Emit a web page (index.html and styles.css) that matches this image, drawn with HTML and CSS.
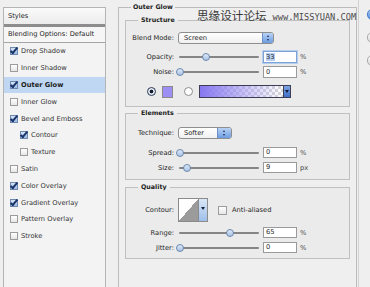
FILE: index.html
```html
<!DOCTYPE html>
<html lang="en">
<head>
	<meta charset="UTF-8">
	<title>Layer Style - Outer Glow</title>
	<link rel="stylesheet" href="styles.css">
</head>
<body>
	<div class="dialog">
		<!-- styles list on the left -->
		<div class="styles-list">
			<div class="list-head">Styles</div>
			<div class="list-blend">Blending Options: Default</div>
			<ul class="effects">
				<li><span class="check on"></span>Drop Shadow</li>
				<li><span class="check"></span>Inner Shadow</li>
				<li class="selected"><span class="check on"></span>Outer Glow</li>
				<li><span class="check"></span>Inner Glow</li>
				<li><span class="check on"></span>Bevel and Emboss</li>
				<li class="sub"><span class="check on"></span>Contour</li>
				<li class="sub"><span class="check"></span>Texture</li>
				<li><span class="check"></span>Satin</li>
				<li><span class="check on"></span>Color Overlay</li>
				<li><span class="check on"></span>Gradient Overlay</li>
				<li><span class="check"></span>Pattern Overlay</li>
				<li><span class="check"></span>Stroke</li>
			</ul>
		</div>

		<!-- outer glow settings -->
		<fieldset class="panel">
			<legend>Outer Glow</legend>

			<fieldset class="group structure">
				<legend>Structure</legend>
				<div class="row r-blend">
					<label>Blend Mode:</label>
					<div class="popup blend"><span>Screen</span><i class="stepper"></i></div>
				</div>
				<div class="row r-opacity">
					<label>Opacity:</label>
					<div class="slider"><span class="thumb" style="left:33%"></span></div>
					<div class="field focus"><span class="hl">33</span></div>
					<span class="unit">%</span>
				</div>
				<div class="row r-noise">
					<label>Noise:</label>
					<div class="slider"><span class="thumb" style="left:0%"></span></div>
					<div class="field">0</div>
					<span class="unit">%</span>
				</div>
				<div class="row r-color">
					<span class="radio on"></span>
					<span class="swatch"></span>
					<span class="radio"></span>
					<div class="gradient"><span class="grad-fill"></span><i class="grad-arrow"></i></div>
				</div>
			</fieldset>

			<fieldset class="group elements">
				<legend>Elements</legend>
				<div class="row r-tech">
					<label>Technique:</label>
					<div class="popup tech"><span>Softer</span><i class="stepper"></i></div>
				</div>
				<div class="row r-spread">
					<label>Spread:</label>
					<div class="slider"><span class="thumb" style="left:0%"></span></div>
					<div class="field">0</div>
					<span class="unit">%</span>
				</div>
				<div class="row r-size">
					<label>Size:</label>
					<div class="slider"><span class="thumb" style="left:9%"></span></div>
					<div class="field">9</div>
					<span class="unit">px</span>
				</div>
			</fieldset>

			<fieldset class="group quality">
				<legend>Quality</legend>
				<div class="row r-contour">
					<label>Contour:</label>
					<div class="contour"><span class="curve"></span><i class="curve-arrow"></i></div>
					<span class="check aa"></span>
					<span class="aa-text">Anti-aliased</span>
				</div>
				<div class="row r-range">
					<label>Range:</label>
					<div class="slider"><span class="thumb" style="left:63%"></span></div>
					<div class="field">65</div>
					<span class="unit">%</span>
				</div>
				<div class="row r-jitter">
					<label>Jitter:</label>
					<div class="slider"><span class="thumb" style="left:0%"></span></div>
					<div class="field">0</div>
					<span class="unit">%</span>
				</div>
			</fieldset>
		</fieldset>

		<!-- dialog buttons, mostly cut off -->
		<div class="buttons">
			<span class="btn default"></span>
			<span class="btn"></span>
			<span class="btn"></span>
		</div>
	</div>

	<div class="watermark">思缘设计论坛<span>www.MISSYUAN.COM</span></div>
</body>
</html>
```

FILE: styles.css
```css
body {
	margin: 0;
	background-color: #efefef;
	font-family: "DejaVu Sans", Verdana, sans-serif;
	font-size: 6.7px;
	color: #262626;
	overflow: hidden;
}
.dialog {
	display: flex;
	align-items: flex-start;
	width: 370px;
	height: 287px;
	overflow: hidden;
}
.dialog > * {
	flex-shrink: 0;
}

/* left list */
.styles-list {
	width: 101px;
	height: 285px;
	margin: 7px 0 0 3px;
	border: 1px solid #b4b4b4;
	background-color: #f3f3f3;
}
.list-head {
	height: 16px;
	line-height: 16px;
	padding-left: 4px;
	background: linear-gradient(#fafafa, #ececec);
	border-bottom: 3px solid #8d8d8d;
}
.list-blend {
	height: 15px;
	line-height: 15px;
	padding-left: 4px;
	background-color: #f6f6f6;
	border-bottom: 1px solid #a5a5a5;
}
.effects {
	list-style: none;
	margin: 0;
	padding: 0;
	color: #333;
}
.effects li {
	display: flex;
	align-items: center;
	height: 16.8px;
	padding-left: 6px;
}
.effects li.sub {
	padding-left: 16px;
}
.effects li.selected {
	background-color: #bfd7f3;
	font-weight: bold;
	color: #1e1e1e;
}
.check {
	position: relative;
	display: inline-block;
	width: 6px;
	height: 6px;
	margin-right: 3px;
	border: 1px solid #9c9c9c;
	background: linear-gradient(#ffffff, #e6e6e6);
}
.check.on {
	background: linear-gradient(#d6e4f6, #9dbbe4);
	border-color: #6f88ad;
}
.check.on::after {
	content: '';
	position: absolute;
	left: 1px;
	top: -2px;
	width: 2px;
	height: 6px;
	border: solid #1b356b;
	border-width: 0 2px 2px 0;
	transform: rotate(40deg);
}

/* outer glow panel */
fieldset {
	margin: 0;
	min-width: 0;
}
legend {
	line-height: 8px;
	font-weight: bold;
	font-size: 6.3px;
	color: #222;
}
.panel {
	width: 225px;
	height: 290px;
	margin: 3px 0 0 12px;
	padding: 0 6px;
	border: 1px solid #bcbcbc;
}
.panel > legend {
	margin-left: 6px;
	padding: 0 2px;
}
.group {
	padding: 0;
	border: 1px solid #c0c0c0;
	background-color: #ebebeb;
}
.group > legend {
	margin-left: 12px;
	padding: 0 3px;
}
.structure {
	margin-top: 5px;
	padding: 8px 0 8px;
}
.elements {
	margin-top: 2px;
	padding: 10px 0 6px;
}
.quality {
	margin-top: 3px;
	padding: 7px 0 5px;
}

.row {
	display: flex;
	align-items: center;
}
.row label {
	width: 48px;
	margin-right: 4px;
	text-align: right;
}
.r-opacity { margin-top: 7px; }
.r-noise { margin-top: 3px; }
.r-color { margin-top: 7px; }
.r-spread { margin-top: 8px; }
.r-size { margin-top: 4px; }
.r-range { margin-top: 5px; }
.r-jitter { margin-top: 4px; }

/* popup menus */
.popup {
	display: flex;
	align-items: center;
	height: 10px;
	border: 1px solid #8e8e8e;
	border-radius: 3px;
	background: linear-gradient(#ffffff, #f0f0f0);
	overflow: hidden;
}
.popup span {
	flex: 1;
	padding-left: 5px;
}
.popup.blend {
	width: 94px;
}
.popup.tech {
	width: 52px;
}
.stepper {
	position: relative;
	width: 10px;
	height: 10px;
	border-left: 1px solid #6d8fc4;
	background: linear-gradient(#b9d3f5, #6c9ce0);
}
.popup.tech .stepper {
	width: 13px;
}
.stepper::before,
.stepper::after {
	content: '';
	position: absolute;
	left: 50%;
	margin-left: -1.5px;
	border-left: 1.5px solid transparent;
	border-right: 1.5px solid transparent;
}
.stepper::before {
	top: 2px;
	border-bottom: 2px solid #1c2f57;
}
.stepper::after {
	bottom: 2px;
	border-top: 2px solid #1c2f57;
}

/* sliders and fields */
.slider {
	position: relative;
	width: 80px;
	height: 2px;
	margin-left: 1px;
	border-radius: 1px;
	background-color: #858585;
}
.thumb {
	position: absolute;
	top: -3px;
	width: 6px;
	height: 6px;
	margin-left: -3px;
	border: 1px solid #6c88ae;
	border-radius: 50%;
	background: linear-gradient(#dde9f7, #a8c3e6);
}
.field {
	width: 30px;
	height: 10px;
	line-height: 10px;
	margin-left: 4px;
	padding-left: 2px;
	border: 1px solid #9a9a9a;
	background-color: #fff;
}
.elements .field,
.quality .field {
	height: 9px;
	line-height: 9px;
}
.field.focus {
	border-color: #7da2d6;
	box-shadow: 0 0 0 1px #b7cdec;
}
.field .hl {
	background-color: #b6cff0;
}
.unit {
	margin-left: 3px;
	color: #444;
}

/* glow colour row */
.radio {
	display: inline-block;
	width: 7px;
	height: 7px;
	border: 1px solid #8c8c8c;
	border-radius: 50%;
	background-color: #fff;
}
.radio.on {
	margin-left: 21px;
	border-color: #2b3650;
	background: radial-gradient(circle, #151b2a 0 1.6px, #e3ebf6 2.2px);
}
.swatch {
	width: 9px;
	height: 10px;
	margin-left: 6px;
	border: 1px solid #8a8a8a;
	background-color: #9c8ef3;
}
.r-color .radio:not(.on) {
	margin-left: 11px;
}
.gradient {
	display: flex;
	width: 90px;
	height: 11px;
	margin-left: 6px;
	border: 1px solid #3d3d55;
}
.grad-fill {
	flex: 1;
	background:
		linear-gradient(90deg, #8777f0, rgba(160, 150, 245, 0.55) 55%, rgba(255, 255, 255, 0)),
		repeating-conic-gradient(#ffffff 0 25%, #d6d6d6 0 50%) 0 0 / 6px 6px;
}
.grad-arrow {
	position: relative;
	width: 6px;
	border-left: 1px solid #3d3d55;
	background: linear-gradient(#7fa4e4, #3e6fc8);
}
.grad-arrow::after {
	content: '';
	position: absolute;
	left: 1px;
	top: 4px;
	border-left: 2px solid transparent;
	border-right: 2px solid transparent;
	border-top: 3px solid #0f1a33;
}

/* contour picker */
.contour {
	display: flex;
	width: 28px;
	height: 22px;
	border: 1px solid #8b8b8b;
}
.curve {
	flex: 1;
	background: linear-gradient(to top left, #9b9b9b 50%, #ffffff 50%);
}
.curve-arrow {
	position: relative;
	width: 8px;
	border-left: 1px solid #8b8b8b;
	background: linear-gradient(#d9e7f8, #9fbfe9);
}
.curve-arrow::after {
	content: '';
	position: absolute;
	left: 2px;
	top: 8px;
	border-left: 2px solid transparent;
	border-right: 2px solid transparent;
	border-top: 3px solid #13213f;
}
.check.aa {
	width: 7px;
	height: 7px;
	margin: 0 0 0 10px;
}
.aa-text {
	margin-left: 5px;
}

/* cut-off dialog buttons */
.buttons {
	display: flex;
	flex-direction: column;
	height: 287px;
	margin-left: 1px;
	padding-left: 8px;
	border-left: 1px solid #d2d2d2;
}
.btn {
	width: 20px;
	height: 9px;
	margin-top: 12px;
	border: 1px solid #a9a9a9;
	border-radius: 5px;
	background: linear-gradient(#fafafa, #dcdcdc);
}
.btn.default {
	margin-top: 9px;
	border-color: #4a7ac4;
	background: linear-gradient(#a9ccf6, #4f8de0);
}

/* site watermark */
.watermark {
	position: absolute;
	left: 197px;
	top: 8px;
	font-family: "Noto Sans CJK SC", sans-serif;
	font-size: 11.6px;
	line-height: 14px;
	color: #3a3a3a;
}
.watermark span {
	margin-left: 6px;
	font-family: "DejaVu Sans Mono", monospace;
	font-size: 8.7px;
	color: #4a4a4a;
}
```
